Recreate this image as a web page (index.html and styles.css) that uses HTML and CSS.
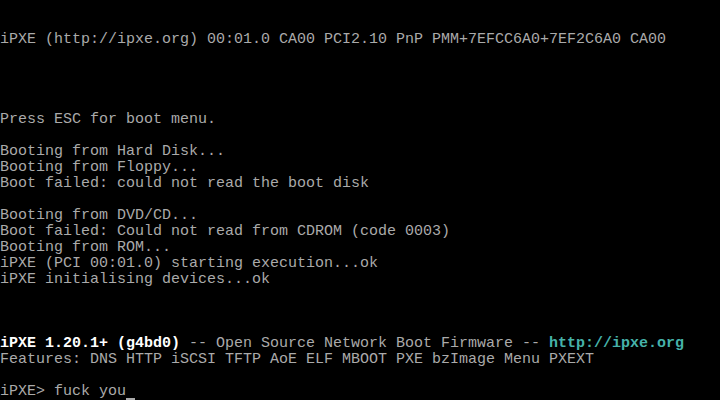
FILE: index.html
```html
<!DOCTYPE html>
<html>
<head>
<meta charset="utf-8">
<link rel="stylesheet" href="styles.css">
</head>
<body>
<pre class="console">


iPXE (http://ipxe.org) 00:01.0 CA00 PCI2.10 PnP PMM+7EFCC6A0+7EF2C6A0 CA00




Press ESC for boot menu.

Booting from Hard Disk...
Booting from Floppy...
Boot failed: could not read the boot disk

Booting from DVD/CD...
Boot failed: Could not read from CDROM (code 0003)
Booting from ROM...
iPXE (PCI 00:01.0) starting execution...ok
iPXE initialising devices...ok



<span class="bright">iPXE 1.20.1+ (g4bd0)</span> -- Open Source Network Boot Firmware -- <span class="link">http://ipxe.org</span>
Features: DNS HTTP iSCSI TFTP AoE ELF MBOOT PXE bzImage Menu PXEXT

iPXE&gt; fuck you<span class="cursor"> </span></pre>
</body>
</html>
```
FILE: styles.css
```css
html, body {
  margin: 0;
  padding: 0;
  background: #000;
  width: 720px;
  height: 400px;
  overflow: hidden;
}
.console {
  margin: 0;
  font-family: "Liberation Mono", "DejaVu Sans Mono", monospace;
  font-size: 15px;
  line-height: 16px;
  color: #aaaaaa;
  white-space: pre;
}
.bright {
  color: #ffffff;
  font-weight: bold;
}
.link {
  color: #46b2aa;
  font-weight: bold;
}
.cursor {
  display: inline-block;
  width: 9px;
  height: 16px;
  vertical-align: top;
  box-sizing: border-box;
  border-bottom: 2px solid #aaaaaa;
  border-top: 12px solid transparent;
}
```
